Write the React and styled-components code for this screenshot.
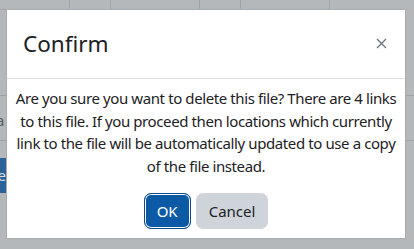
import styled, { createGlobalStyle } from 'styled-components';

const Global = createGlobalStyle`
html, body {
  margin: 0;
  padding: 0;
  width: 414px;
  height: 249px;
  overflow: hidden;
  background: #b5b8bb;
  font-family: "Noto Sans", "Open Sans", sans-serif;
}
`;

const Page = styled.div`
position: relative;
width: 414px;
height: 249px;
overflow: hidden;
background: #b5b8bb;
`;

const TopRow = styled.div`
display: flex;
gap: 40px;
margin-top: -20px;
margin-left: -20px;
`;

const GhostBox = styled.div`
width: 88px;
height: 28px;
border: 1px solid #a1a5a9;
border-radius: 3px;
`;

const Rule = styled.div`
border-top: 1px solid #9fa3a7;
margin-top: ${p => p.top}px;
`;

const GhostText = styled.div`
font-size: 15px;
color: #56606a;
margin-top: 14px;
margin-left: -4px;
line-height: 20px;
`;

const GhostButton = styled.div`
width: 40px;
height: 35px;
margin-top: 17px;
margin-left: -34px;
background: #2b6298;
color: #d5dde6;
font-size: 15px;
line-height: 35px;
text-align: right;
`;

const Overlay = styled.div`
position: absolute;
inset: 0;
display: flex;
align-items: flex-start;
`;

const Dialog = styled.div`
width: 398px;
margin: 9px 0 0 6px;
background: #fff;
border: 1px solid #a9acb0;
border-radius: 1px;
color: #1d2125;
`;

const Header = styled.div`
display: flex;
align-items: center;
justify-content: space-between;
padding: 20px 16px 21px 16px;
border-bottom: 1px solid #dee2e6;
`;

const Title = styled.h5`
margin: 0;
font-size: 22.5px;
font-weight: 400;
line-height: 27px;
`;

const Close = styled.button`
border: none;
background: none;
padding: 0;
margin-right: 1px;
width: 14px;
height: 14px;
display: flex;
align-items: center;
justify-content: center;
cursor: pointer;
`;

const Body = styled.div`
padding: 8px 6px 0;
font-size: 15px;
letter-spacing: -0.4px;
line-height: 22.5px;
text-align: center;
`;

const Footer = styled.div`
display: flex;
justify-content: center;
gap: 5px;
padding: 16px 0 9px;
`;

const Button = styled.button`
font-family: inherit;
font-size: 15px;
line-height: 22px;
padding: 6px 12px;
border-radius: 7px;
cursor: pointer;
border: 1px solid ${p => (p.primary ? '#0e4c8c' : '#ced4da')};
background: ${p => (p.primary ? '#0c5aa6' : '#ced4da')};
color: ${p => (p.primary ? '#fff' : '#1d2125')};
box-shadow: ${p => (p.primary ? 'inset 0 0 0 1px #fff' : 'none')};
`;

const App = () => (
  <Page>
    <Global />
    <TopRow>
      <GhostBox />
      <GhostBox />
      <GhostBox />
    </TopRow>
    <Rule top={85} />
    <GhostText>a</GhostText>
    <Rule top={10} />
    <GhostButton>e</GhostButton>
    <Overlay>
      <Dialog role="dialog">
        <Header>
          <Title>Confirm</Title>
          <Close aria-label="Close">
            <svg width="11" height="11" viewBox="0 0 11 11">
              <path d="M1 1L10 10M10 1L1 10" stroke="#6a737b" strokeWidth="1.3" />
            </svg>
          </Close>
        </Header>
        <Body>
          Are you sure you want to delete this file? There are 4 links to this file. If you proceed
          then locations which currently link to the file will be automatically updated to use a
          copy of the file instead.
        </Body>
        <Footer>
          <Button primary>OK</Button>
          <Button>Cancel</Button>
        </Footer>
      </Dialog>
    </Overlay>
  </Page>
);

export default App;
